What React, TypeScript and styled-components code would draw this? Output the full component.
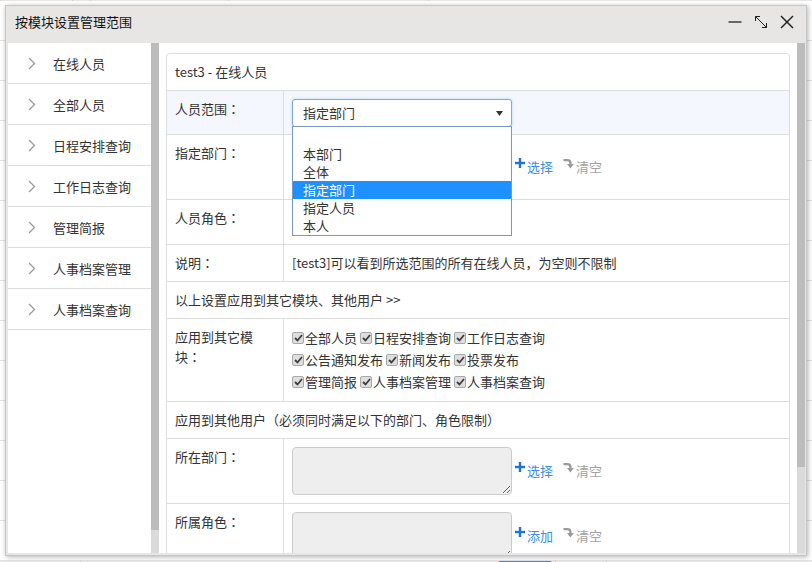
import React from 'react';
import styled, { createGlobalStyle } from 'styled-components';

/* global */
const GlobalStyle = createGlobalStyle`
  html, body {
    margin: 0;
    padding: 0;
  }
  body {
    width: 812px;
    height: 562px;
    overflow: hidden;
    background: #f0f0f0;
    font-family: "Microsoft YaHei", "Noto Sans CJK SC", sans-serif;
    font-size: 13px;
    color: #333;
  }
`;

/* page behind the dialog */
const Screen = styled.div`
  position: relative;
  width: 812px;
  height: 562px;
  overflow: hidden;
`;

const BgPage = styled.div`
  display: flex;
  flex-direction: column;
  height: 100%;
`;

const BgTop = styled.div`
  height: 6px;
  background: #e6e6e6;
  overflow: hidden;
  display: flex;
  align-items: flex-end;
`;

const BgTopCell = styled.div<{ $w: number; $mark?: number }>`
  width: ${(p) => p.$w}px;
  height: 6px;
  border-left: 1px solid #cfcfcf;
  box-sizing: border-box;
  padding: 2px 0 0 6px;

  &::after {
    content: '';
    display: block;
    width: ${(p) => p.$mark ?? 0}px;
    height: 2px;
    background: #b5b5b5;
  }
`;

const BgBody = styled.div`
  flex: 1;
  background: #fff;
`;

const BgRow = styled.div`
  height: 39px;
  border-bottom: 1px solid #e2e2e2;
`;

const BgFooter = styled.div`
  height: 7px;
  background: #ececec;
  display: flex;
`;

const BgButton = styled.div<{ $left: number; $w: number; $blue?: boolean }>`
  margin-left: ${(p) => p.$left}px;
  width: ${(p) => p.$w}px;
  background: ${(p) => (p.$blue ? '#3a8ee6' : 'transparent')};
  border-right: ${(p) => (p.$blue ? 'none' : '1px solid #cfcfcf')};
`;

/* dialog */
const Dialog = styled.div`
  position: absolute;
  left: 5px;
  top: 5px;
  width: 802px;
  height: 551px;
  box-sizing: border-box;
  border: 1px solid #c6c6c6;
  background: #e7e6e4;
  box-shadow: 1px 1px 5px rgba(0, 0, 0, 0.3);
  display: flex;
  flex-direction: column;
`;

const TitleBar = styled.div`
  height: 37px;
  box-sizing: border-box;
  display: flex;
  align-items: center;
  padding: 0 6px 6px 9px;
`;

const Title = styled.div`
  flex: 1;
  font-size: 13px;
  line-height: 20px;
  color: #111;
`;

const TitleBtn = styled.div`
  width: 26px;
  height: 20px;
  display: flex;
  align-items: center;
  justify-content: center;
`;

const DialogBody = styled.div`
  flex: 1;
  min-height: 0;
  display: flex;
  padding: 0 1px 2px 2px;
`;

/* side menu */
const SideCol = styled.div`
  width: 143px;
  background: #fff;
  overflow: hidden;
`;

const SideItem = styled.div`
  height: 40px;
  border-bottom: 1px solid #ddd;
  display: flex;
  align-items: center;
  padding-left: 20px;
  color: #333;
  font-size: 13px;
`;

const SideText = styled.span`
  margin-left: 17px;
`;

const ScrollTrack = styled.div`
  width: 8px;
  background: #dadada;
  flex-shrink: 0;
`;

const ScrollThumb = styled.div<{ $h: number }>`
  height: ${(p) => p.$h}px;
  background: #bcbcbc;
`;

/* main panel */
const Main = styled.div`
  flex: 1;
  min-width: 0;
  background: #fff;
  padding: 10px 7px 0;
  overflow: hidden;
`;

const Panel = styled.div`
  border: 1px solid #ddd;
  border-radius: 4px;
`;

const PanelHead = styled.div`
  padding: 8px;
  line-height: 20px;
  border-bottom: 1px solid #ddd;
`;

const Row = styled.div<{ $active?: boolean }>`
  display: flex;
  border-bottom: 1px solid #ddd;
  background: ${(p) => (p.$active ? '#f4f8fe' : '#fff')};
`;

const Label = styled.div`
  width: 117px;
  flex-shrink: 0;
  box-sizing: border-box;
  padding: 8px 20px 8px 8px;
  line-height: 20px;
  border-right: 1px solid #ddd;
`;

// centred full-width colon, as the reference font draws it
const Colon = styled.span`
  font-family: "Noto Sans CJK TC", "Noto Sans CJK SC", sans-serif;
`;

const Value = styled.div<{ $pb?: number }>`
  flex: 1;
  padding: 8px 8px ${(p) => p.$pb ?? 8}px;
  line-height: 20px;
  display: flex;
  align-items: center;
`;

const ValueCol = styled.div`
  flex: 1;
  padding: 8px;
  display: flex;
  flex-direction: column;
`;

const FullRow = styled.div`
  padding: 8px;
  line-height: 20px;
  border-bottom: 1px solid #ddd;
`;

/* select with open list */
const SelectWrap = styled.div`
  position: relative;
  width: 220px;
`;

const SelectBox = styled.div`
  height: 28px;
  box-sizing: border-box;
  border: 1px solid #82a9e2;
  border-radius: 3px;
  box-shadow: 0 0 3px rgba(102, 160, 233, 0.45);
  background: #fff;
  display: flex;
  align-items: center;
  justify-content: space-between;
  padding: 0 8px 0 10px;
`;

const DropList = styled.div`
  position: absolute;
  left: 0;
  top: calc(100% - 1px);
  width: 220px;
  box-sizing: border-box;
  border: 1px solid #7b98c4;
  background: #fff;
  z-index: 5;
`;

const Option = styled.div<{ $selected?: boolean }>`
  height: 18px;
  line-height: 18px;
  padding-left: 10px;
  color: ${(p) => (p.$selected ? '#fff' : '#333')};
  background: ${(p) => (p.$selected ? '#1e90ff' : 'transparent')};
`;

/* fields */
const Area = styled.textarea`
  width: 220px;
  height: 48px;
  box-sizing: border-box;
  border: 1px solid #ccc;
  border-radius: 4px;
  background: #eee;
  font: inherit;
  margin: 0;
  display: block;
`;

const Input = styled.div`
  width: 220px;
  height: 28px;
  box-sizing: border-box;
  border: 1px solid #ccc;
  border-radius: 4px;
`;

const Action = styled.span<{ $muted?: boolean }>`
  display: inline-flex;
  align-items: center;
  margin-left: ${(p) => (p.$muted ? 10 : 3)}px;
  color: ${(p) => (p.$muted ? '#a3a3a3' : '#3a8ee6')};
  font-size: 13px;
  line-height: 20px;
  cursor: pointer;
`;

const ActionIcon = styled.svg`
  margin-right: 2px;
  margin-top: -8px;
`;

/* checkboxes */
const CheckLine = styled.div`
  display: flex;
  line-height: 22px;
  height: 22px;
`;

const CheckItem = styled.label`
  display: inline-flex;
  align-items: center;
  margin-right: 3px;
  white-space: nowrap;
`;

const CheckBox = styled.span`
  width: 12px;
  height: 12px;
  box-sizing: border-box;
  border: 1px solid #a8a8a8;
  border-radius: 2px;
  background: #dedede;
  margin-right: 1px;
  display: inline-flex;
  align-items: center;
  justify-content: center;
`;

const Chevron = () => (
  <svg width="8" height="13" viewBox="0 0 8 13">
    <polyline points="1,1 6.5,6.5 1,12" fill="none" stroke="#9a9a9a" strokeWidth="1.3" />
  </svg>
);

const PlusIcon = () => (
  <ActionIcon width="10" height="10" viewBox="0 0 10 10">
    <rect x="3.8" y="0" width="2.4" height="10" fill="#1f74d4" />
    <rect x="0" y="3.8" width="10" height="2.4" fill="#1f74d4" />
  </ActionIcon>
);

const ClearIcon = () => (
  <ActionIcon width="11" height="11" viewBox="0 0 11 11">
    <path d="M0.5 2.2 H4.5 Q7.4 2.2 7.4 5 V6.5" fill="none" stroke="#999" strokeWidth="2.2" />
    <path d="M4 6 L10.8 6 L7.4 10.5 Z" fill="#999" />
  </ActionIcon>
);

const Tick = () => (
  <svg width="9" height="8" viewBox="0 0 9 8">
    <polyline points="1,4 3.5,6.5 8,1" fill="none" stroke="#3c3c3c" strokeWidth="1.8" />
  </svg>
);

const menus = ['在线人员', '全部人员', '日程安排查询', '工作日志查询', '管理简报', '人事档案管理', '人事档案查询'];

const checkLines = [
  ['全部人员', '日程安排查询', '工作日志查询'],
  ['公告通知发布', '新闻发布', '投票发布'],
  ['管理简报', '人事档案管理', '人事档案查询'],
];

const scopes = ['', '本部门', '全体', '指定部门', '指定人员', '本人'];

const Actions = ({ first }: { first: string }) => (
  <>
    <Action>
      <PlusIcon />
      {first}
    </Action>
    <Action $muted>
      <ClearIcon />
      清空
    </Action>
  </>
);

// lines: label text split where the narrow column wraps it
const FieldLabel = ({ lines }: { lines: string[] }) => (
  <Label>
    {lines.map((l, i) => (
      <React.Fragment key={i}>
        {i > 0 && <br />}
        {l}
      </React.Fragment>
    ))}
    <Colon>：</Colon>
  </Label>
);

export default function App() {
  return (
    <Screen>
      <GlobalStyle />
      <BgPage>
        <BgTop>
          <BgTopCell $w={72} />
          <BgTopCell $w={18} />
          <BgTopCell $w={138} $mark={60} />
          <BgTopCell $w={200} $mark={30} />
          <BgTopCell $w={300} />
        </BgTop>
        <BgBody>
          {Array.from({ length: 14 }).map((_, i) => (
            <BgRow key={i} />
          ))}
        </BgBody>
        <BgFooter>
          <BgButton $left={72} $w={8} />
          <BgButton $left={418} $w={52} $blue />
          <BgButton $left={0} $w={4} />
          <BgButton $left={0} $w={50} />
        </BgFooter>
      </BgPage>

      <Dialog>
        <TitleBar>
          <Title>按模块设置管理范围</Title>
          <TitleBtn>
            <svg width="14" height="14" viewBox="0 0 14 14">
              <line x1="0.5" y1="7" x2="13.5" y2="7" stroke="#222" strokeWidth="1.3" />
            </svg>
          </TitleBtn>
          <TitleBtn>
            <svg width="14" height="14" viewBox="0 0 14 14">
              <line x1="1.5" y1="1.5" x2="12.5" y2="12.5" stroke="#222" strokeWidth="1" />
              <polyline points="1.5,6 1.5,1.5 6,1.5" fill="none" stroke="#222" strokeWidth="1" />
              <polyline points="8,12.5 12.5,12.5 12.5,8" fill="none" stroke="#222" strokeWidth="1" />
            </svg>
          </TitleBtn>
          <TitleBtn>
            <svg width="14" height="14" viewBox="0 0 14 14">
              <line x1="1" y1="1" x2="13" y2="13" stroke="#222" strokeWidth="1.5" />
              <line x1="13" y1="1" x2="1" y2="13" stroke="#222" strokeWidth="1.5" />
            </svg>
          </TitleBtn>
        </TitleBar>

        <DialogBody>
          <SideCol>
            {menus.map((m) => (
              <SideItem key={m}>
                <Chevron />
                <SideText>{m}</SideText>
              </SideItem>
            ))}
          </SideCol>
          <ScrollTrack>
            <ScrollThumb $h={487} />
          </ScrollTrack>

          <Main>
            <Panel>
              <PanelHead>test3 - 在线人员</PanelHead>

              <Row $active>
                <FieldLabel lines={['人员范围']} />
                <Value $pb={7}>
                  <SelectWrap>
                    <SelectBox>
                      <span>指定部门</span>
                      <svg width="7" height="5" viewBox="0 0 7 5">
                        <path d="M0 0 H7 L3.5 5 Z" fill="#333" />
                      </svg>
                    </SelectBox>
                    <DropList>
                      {scopes.map((s, i) => (
                        <Option key={i} $selected={s === '指定部门'}>
                          {s}
                        </Option>
                      ))}
                    </DropList>
                  </SelectWrap>
                </Value>
              </Row>

              <Row>
                <FieldLabel lines={['指定部门']} />
                <Value>
                  <Area readOnly />
                  <Actions first="选择" />
                </Value>
              </Row>

              <Row>
                <FieldLabel lines={['人员角色']} />
                <Value>
                  <Input />
                </Value>
              </Row>

              <Row>
                <FieldLabel lines={['说明']} />
                <Value>[test3]可以看到所选范围的所有在线人员，为空则不限制</Value>
              </Row>

              <FullRow>以上设置应用到其它模块、其他用户 &gt;&gt;</FullRow>

              <Row>
                <FieldLabel lines={['应用到其它模', '块']} />
                <ValueCol>
                  {checkLines.map((line, i) => (
                    <CheckLine key={i}>
                      {line.map((c) => (
                        <CheckItem key={c}>
                          <CheckBox>
                            <Tick />
                          </CheckBox>
                          {c}
                        </CheckItem>
                      ))}
                    </CheckLine>
                  ))}
                </ValueCol>
              </Row>

              <FullRow>应用到其他用户（必须同时满足以下的部门、角色限制）</FullRow>

              <Row>
                <FieldLabel lines={['所在部门']} />
                <Value>
                  <Area readOnly />
                  <Actions first="选择" />
                </Value>
              </Row>

              <Row>
                <FieldLabel lines={['所属角色']} />
                <Value>
                  <Area readOnly />
                  <Actions first="添加" />
                </Value>
              </Row>
            </Panel>
          </Main>
          <ScrollTrack>
            <ScrollThumb $h={424} />
          </ScrollTrack>
        </DialogBody>
      </Dialog>
    </Screen>
  );
}
